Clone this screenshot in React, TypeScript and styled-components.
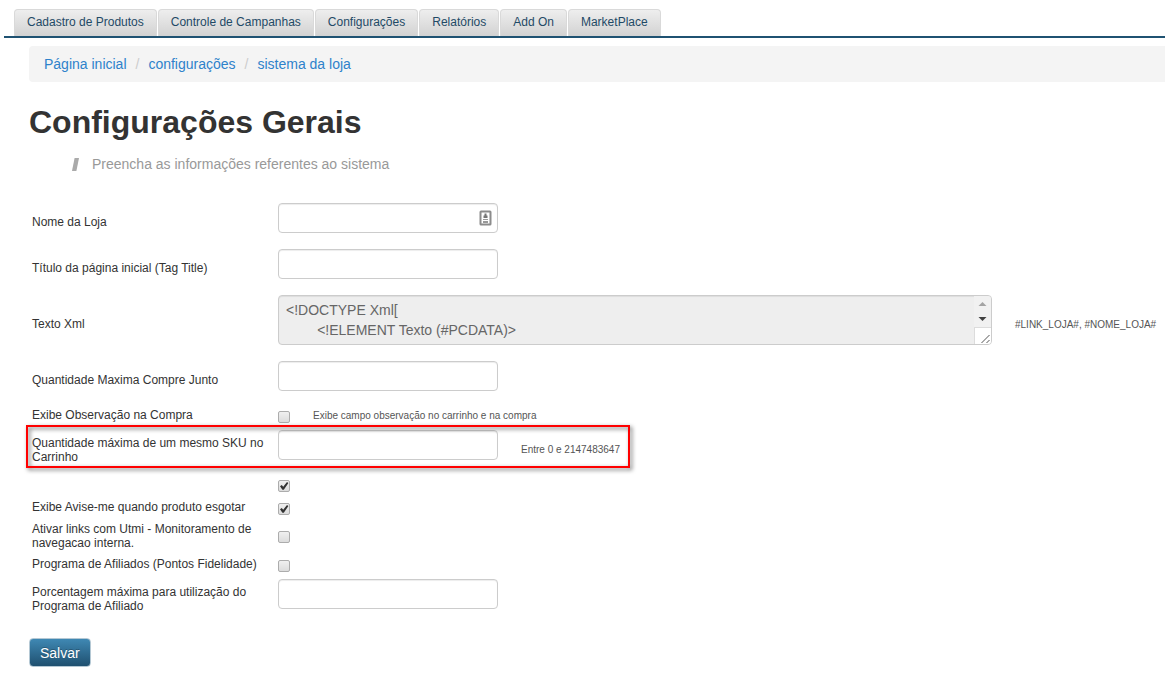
import React from "react";
import styled, { createGlobalStyle } from "styled-components";

const GlobalStyle = createGlobalStyle`
  * { box-sizing: border-box; }
  body {
    margin: 0;
    background: #fff;
    color: #333;
    font: 14px/20px "Liberation Sans", Arial, sans-serif;
  }
`;

const TabBar = styled.nav`
  display: flex;
  gap: 1px;
  margin-left: 4px;
  padding: 9px 0 0 10px;
  border-bottom: 2px solid #1f5272;
`;

const Tab = styled.a`
  height: 27px;
  padding: 0 12px;
  border: 1px solid #d9d9d9;
  border-bottom: 0;
  border-radius: 4px 4px 0 0;
  background: linear-gradient(#eeeeee, #d2d2d2);
  color: #1f4a66;
  font-size: 12px;
  line-height: 24px;
  white-space: nowrap;
  text-decoration: none;
`;

const Main = styled.main`
  padding: 8px 0 14px 29px;
`;

const Breadcrumb = styled.ol`
  display: flex;
  margin: 0;
  padding: 8px 15px;
  list-style: none;
  background: #f4f4f4;
  border-radius: 4px 0 0 4px;
`;

const Crumb = styled.li`
  & + &::before {
    content: "/";
    padding: 0 9px;
    color: #ccc;
  }
`;

const CrumbLink = styled.a`
  color: #2e82cb;
  text-decoration: none;
`;

const Title = styled.h1`
  margin: 20px 0 12px;
  font-size: 32px;
  line-height: 40px;
  color: #333;
`;

const Subtitle = styled.p`
  display: flex;
  align-items: center;
  gap: 13px;
  margin: 0 0 26px;
  padding-left: 43px;
  color: #999;
`;

const Row = styled.div`
  position: relative;
  display: grid;
  grid-template-columns: 246px 1fr;
  align-items: center;
  min-height: 23px;
  margin-left: 3px;
  padding: 3px 0;
`;

const Label = styled.label`
  max-width: 240px;
  min-height: 16px;
  font-size: 12px;
  line-height: 14px;
`;

const Controls = styled.div`
  grid-column: 2;
  display: flex;
  align-items: center;
  gap: 23px;
`;

const Field = styled.div`
  position: relative;
  width: 220px;
  margin-bottom: 10px;
`;

const TextInput = styled.input`
  display: block;
  width: 100%;
  height: 30px;
  padding: 4px 6px;
  border: 1px solid #ccc;
  border-radius: 4px;
  background: #fff;
  box-shadow: inset 0 1px 1px rgba(0, 0, 0, 0.075);
  color: #555;
  font: inherit;
`;

const FieldIcon = styled.svg`
  position: absolute;
  top: 7px;
  right: 6px;
`;

const XmlBox = styled.div`
  display: flex;
  width: 714px;
  height: 50px;
  margin-bottom: 10px;
  overflow: hidden;
  border: 1px solid #ccc;
  border-radius: 4px;
  background: #eee;
  box-shadow: inset 0 1px 1px rgba(0, 0, 0, 0.075);
`;

const XmlArea = styled.textarea`
  flex: 1;
  padding: 4px 7px;
  border: 0;
  background: transparent;
  color: #666;
  font: inherit;
  resize: none;
  overflow: hidden;
`;

const Checkbox = styled.input`
  appearance: none;
  width: 12px;
  height: 12px;
  margin: 2px 0 0;
  border: 1px solid #acacac;
  border-radius: 2px;
  background: linear-gradient(#f0f0f0, #dcdcdc);
  &:checked {
    background:
      url("data:image/svg+xml,%3Csvg xmlns='http://www.w3.org/2000/svg' viewBox='0 0 10 10'%3E%3Cpath d='M1 5.2 2.8 4 4.2 5.8 8 1 9.4 2 4.8 8.8 3.4 8.8Z' fill='%23333'/%3E%3C/svg%3E"),
      linear-gradient(#f0f0f0, #dcdcdc);
  }
`;

const Hint = styled.span`
  color: #555;
  font-size: 10px;
  line-height: 14px;
  white-space: nowrap;
`;

const Highlight = styled.div`
  position: absolute;
  top: -2px;
  left: -6px;
  width: 604px;
  height: 43px;
  border: 2px solid #f00;
  filter: drop-shadow(2px 2px 2px rgba(0, 0, 0, 0.6));
  pointer-events: none;
`;

const SaveButton = styled.button`
  display: block;
  height: 29px;
  margin: 16px 0 0;
  padding: 0 10px;
  border: 1px solid #b4c8d4;
  border-radius: 4px;
  background: linear-gradient(#3f88b3, #1f5070);
  color: #fff;
  font: inherit;
  text-shadow: 0 -1px 0 rgba(0, 0, 0, 0.25);
`;

const tabs = [
  "Cadastro de Produtos",
  "Controle de Campanhas",
  "Configurações",
  "Relatórios",
  "Add On",
  "MarketPlace",
];

const crumbs = ["Página inicial", "configurações", "sistema da loja"];

const xml = "<!DOCTYPE Xml[\n\t<!ELEMENT Texto (#PCDATA)>";

type RowProps = {
  id: string;
  label?: string;
  hint?: string;
  highlighted?: boolean;
  children: React.ReactNode;
};

function FormRow({ id, label, hint, highlighted, children }: RowProps) {
  return (
    <Row>
      {label && <Label htmlFor={id}>{label}</Label>}
      <Controls>
        {children}
        {hint && <Hint>{hint}</Hint>}
      </Controls>
      {highlighted && <Highlight />}
    </Row>
  );
}

function TextField({ id, icon }: { id: string; icon?: boolean }) {
  return (
    <Field>
      <TextInput id={id} type="text" />
      {icon && (
        <FieldIcon width="13" height="16" viewBox="0 0 13 16" aria-hidden="true">
          <rect x="1.5" y="1.5" width="10" height="13" rx="0.5" fill="#fff" stroke="#8c8c8c" strokeWidth="2" />
          <path d="M5.5 3.5h2v2h1v2.5h-4V5.500h1z" fill="#777" />
          <path d="M4 9h5v1H4zM4 11h5v2H4z" fill="#999" />
        </FieldIcon>
      )}
    </Field>
  );
}

export default function App() {
  return (
    <>
      <GlobalStyle />
      <TabBar>
        {tabs.map((name) => (
          <Tab key={name} href="#">{name}</Tab>
        ))}
      </TabBar>
      <Main>
        <Breadcrumb>
          {crumbs.map((name) => (
            <Crumb key={name}>
              <CrumbLink href="#">{name}</CrumbLink>
            </Crumb>
          ))}
        </Breadcrumb>
        <Title>Configurações Gerais</Title>
        <Subtitle>
          <svg width="7" height="14" viewBox="0 0 7 14" aria-hidden="true">
            <path d="M2.600 1H7L4.400 14H0z" fill="#aaa" />
          </svg>
          Preencha as informações referentes ao sistema
        </Subtitle>
        <form onSubmit={(e) => e.preventDefault()}>
          <FormRow id="nome" label="Nome da Loja">
            <TextField id="nome" icon />
          </FormRow>
          <FormRow id="titulo" label="Título da página inicial (Tag Title)">
            <TextField id="titulo" />
          </FormRow>
          <FormRow id="xml" label="Texto Xml" hint="#LINK_LOJA#, #NOME_LOJA#">
            <XmlBox>
              <XmlArea id="xml" readOnly defaultValue={xml} />
              <svg width="17" height="48" viewBox="0 0 17 48" aria-hidden="true">
                <rect width="17" height="32" fill="#f1f1f1" />
                <path d="M4.500 10h8l-4-4z" fill="#a3a3a3" />
                <path d="M4.500 21h8l-4 4z" fill="#404040" />
                <rect y="31" width="17" height="17" fill="#dcdcdc" />
                <rect x="1" y="32" width="16" height="16" fill="#fff" />
                <path d="M7.500 47l8-8M12.500 47l3-3" stroke="#555" strokeWidth="1" />
              </svg>
            </XmlBox>
          </FormRow>
          <FormRow id="junto" label="Quantidade Maxima Compre Junto">
            <TextField id="junto" />
          </FormRow>
          <FormRow
            id="observacao"
            label="Exibe Observação na Compra"
            hint="Exibe campo observação no carrinho e na compra"
          >
            <Checkbox id="observacao" type="checkbox" />
          </FormRow>
          <FormRow
            id="sku"
            label="Quantidade máxima de um mesmo SKU no Carrinho"
            hint="Entre 0 e 2147483647"
            highlighted
          >
            <TextField id="sku" />
          </FormRow>
          <FormRow id="extra">
            <Checkbox id="extra" type="checkbox" defaultChecked />
          </FormRow>
          <FormRow id="avise" label="Exibe Avise-me quando produto esgotar">
            <Checkbox id="avise" type="checkbox" defaultChecked />
          </FormRow>
          <FormRow id="utmi" label="Ativar links com Utmi - Monitoramento de navegacao interna.">
            <Checkbox id="utmi" type="checkbox" />
          </FormRow>
          <FormRow id="afiliados" label="Programa de Afiliados (Pontos Fidelidade)">
            <Checkbox id="afiliados" type="checkbox" />
          </FormRow>
          <FormRow id="porcentagem" label="Porcentagem máxima para utilização do Programa de Afiliado">
            <TextField id="porcentagem" />
          </FormRow>
          <SaveButton type="submit">Salvar</SaveButton>
        </form>
      </Main>
    </>
  );
}
